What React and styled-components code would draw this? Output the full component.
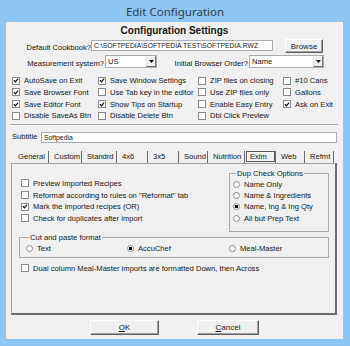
import React from 'react';
import styled, { createGlobalStyle } from 'styled-components';

const GlobalStyle = createGlobalStyle`
  html, body {
    margin: 0;
    padding: 0;
  }
  body {
    background: #8ec6f3;
    font-family: "Liberation Sans", Arial, sans-serif;
  }
`;

const topChecks = [
  [
    { label: 'AutoSave on Exit', on: true },
    { label: 'Save Browser Font', on: true },
    { label: 'Save Editor Font', on: true },
    { label: 'Disable SaveAs Btn', on: false },
  ],
  [
    { label: 'Save Window Settings', on: true },
    { label: 'Use Tab key in the editor', on: false },
    { label: 'Show Tips on Startup', on: true },
    { label: 'Disable Delete Btn', on: false },
  ],
  [
    { label: 'ZIP files on closing', on: false },
    { label: 'Use ZIP files only', on: false },
    { label: 'Enable Easy Entry', on: false },
    { label: 'Dbl Click Preview', on: false },
  ],
  [
    { label: '#10 Cans', on: false },
    { label: 'Gallons', on: false },
    { label: 'Ask on Exit', on: true },
  ],
];

const tabs = [
  { name: 'General', w: 36 },
  { name: 'Custom', w: 33 },
  { name: 'Standrd', w: 35 },
  { name: '4x6', w: 31 },
  { name: '3x5', w: 31 },
  { name: 'Sound', w: 29 },
  { name: 'Nutrition', w: 37 },
  { name: 'Exlm', w: 31, active: true },
  { name: 'Web', w: 29 },
  { name: 'Refmt', w: 29 },
];

const importChecks = [
  { label: 'Preview Imported Recipes', on: false },
  { label: 'Reformat according to rules on "Reformat" tab', on: false },
  { label: 'Mark the imported recipes (OR)', on: true },
  { label: 'Check for duplicates after import', on: false },
];

const dupOptions = [
  { label: 'Name Only', on: false },
  { label: 'Name & Ingredients', on: false },
  { label: 'Name, Ing & Ing Qty', on: true },
  { label: 'All but Prep Text', on: false },
];

const pasteOptions = [
  { label: 'Text', on: false, w: 101 },
  { label: 'AccuChef', on: true, w: 102 },
  { label: 'Meal-Master', on: false, w: 90 },
];

function Check({ label, on }) {
  return (
    <CheckRow>
      <Box>
        {on && (
          <svg width="7" height="7" viewBox="0 0 7 7">
            <path d="M1 3.2 L2.8 5 L6 1.2" fill="none" stroke="#111" strokeWidth="1.4" />
          </svg>
        )}
      </Box>
      <span>{label}</span>
    </CheckRow>
  );
}

function Radio({ label, on, w }) {
  return (
    <RadioRow $w={w}>
      <Dot $on={on} />
      <span>{label}</span>
    </RadioRow>
  );
}

function Combo({ value, width }) {
  return (
    <ComboBox $w={width}>
      <span>{value}</span>
      <Arrow>
        <svg width="5" height="3" viewBox="0 0 5 3">
          <path d="M0 0 H5 L2.5 3 Z" fill="#111" />
        </svg>
      </Arrow>
    </ComboBox>
  );
}

export default function App() {
  return (
    <>
      <GlobalStyle />
      <Window>
        <TitleBar>Edit Configuration</TitleBar>
        <Body>
          <Heading>Configuration Settings</Heading>

          <Row $top={2} $h={14}>
            <Label $w={85}>Default Cookbook?</Label>
            <Field $w={182}>C:\SOFTPEDIA\SOFTPEDIA TEST\SOFTPEDIA.RWZ</Field>
            <Button $w={38} $h={14} $ml={12}>Browse</Button>
          </Row>

          <Row $top={2} $h={13}>
            <Label $w={98}>Measurement system?</Label>
            <Combo value="US" width={52} />
            <Label $w={91}>Initial Browser Order?</Label>
            <Combo value="Name" width={75} />
          </Row>

          <CheckGrid>
            {topChecks.map((col, i) => (
              <CheckCol key={i}>
                {col.map((c) => (
                  <Check key={c.label} {...c} />
                ))}
              </CheckCol>
            ))}
          </CheckGrid>

          <Separator />

          <Row $top={5} $h={11}>
            <SubLabel>Subtitle</SubLabel>
            <Field $w={296}>Softpedia</Field>
          </Row>

          <TabStrip>
            {tabs.map((t) => (
              <Tab key={t.name} $w={t.w} $active={t.active}>
                {t.active ? <Focus>{t.name}</Focus> : t.name}
              </Tab>
            ))}
          </TabStrip>

          <Panel>
            <TopSection>
              <ImportList>
                {importChecks.map((c) => (
                  <Check key={c.label} {...c} />
                ))}
              </ImportList>
              <DupGroup>
                <Legend>Dup Check Options</Legend>
                {dupOptions.map((o) => (
                  <Radio key={o.label} {...o} />
                ))}
              </DupGroup>
            </TopSection>

            <PasteGroup>
              <Legend>Cut and paste format</Legend>
              <PasteRow>
                {pasteOptions.map((o) => (
                  <Radio key={o.label} {...o} />
                ))}
              </PasteRow>
            </PasteGroup>

            <DualRow>
              <Check label="Dual column Meal-Master imports are formatted Down, then Across" on={false} />
            </DualRow>
          </Panel>

          <Buttons>
            <Button $w={69} $h={15}>
              <u>O</u>K
            </Button>
            <Button $w={62} $h={15}>
              <u>C</u>ancel
            </Button>
          </Buttons>
        </Body>
      </Window>
    </>
  );
}

const Window = styled.div`
  width: 350px;
  height: 346px;
  background: #8ec6f3;
  display: flex;
  flex-direction: column;
  color: #161616;
  font-size: 7.6px;
`;

const TitleBar = styled.div`
  height: 22px;
  display: flex;
  align-items: center;
  justify-content: center;
  font-family: "Noto Sans", "Open Sans", sans-serif;
  font-size: 11.5px;
  color: #2e3c4a;
`;

const Body = styled.div`
  margin: 0 7px 7px 6px;
  height: 317px;
  background: #f0f0f0;
  display: flex;
  flex-direction: column;
`;

const Heading = styled.div`
  margin-top: 3px;
  height: 12px;
  line-height: 12px;
  text-align: center;
  font-weight: bold;
  font-size: 10px;
`;

const Row = styled.div`
  margin-top: ${(p) => p.$top}px;
  height: ${(p) => p.$h}px;
  display: flex;
  align-items: center;
`;

const Label = styled.div`
  width: ${(p) => p.$w}px;
  text-align: right;
  white-space: nowrap;
  padding-top: 3px;
`;

const SubLabel = styled.div`
  width: 35px;
  box-sizing: border-box;
  padding-left: 6px;
  white-space: nowrap;
`;

const Field = styled.div`
  width: ${(p) => p.$w}px;
  height: 11px;
  box-sizing: border-box;
  background: #fff;
  border: 1px solid #a9acb2;
  padding: 0 2px;
  line-height: 9px;
  font-size: 6.8px;
  white-space: nowrap;
  overflow: hidden;
  align-self: flex-start;
  margin-top: 1px;
`;

const Button = styled.div`
  width: ${(p) => p.$w}px;
  height: ${(p) => p.$h}px;
  margin-left: ${(p) => p.$ml || 0}px;
  box-sizing: border-box;
  display: flex;
  align-items: center;
  justify-content: center;
  background: #f0f0f0;
  border: 1px solid;
  border-color: #fff #5e5e5e #5e5e5e #fff;
  box-shadow: inset -1px -1px 0 #a0a0a0;
  font-size: 8px;
  color: #1a1a1a;
`;

const ComboBox = styled.div`
  width: ${(p) => p.$w}px;
  height: 13px;
  margin-left: 1px;
  box-sizing: border-box;
  background: #fff;
  border: 1px solid #a9acb2;
  display: flex;
  align-items: flex-start;
  justify-content: space-between;
  padding-left: 2px;
  line-height: 9px;

  & > span {
    padding-top: 1px;
  }
`;

const Arrow = styled.div`
  width: 10px;
  height: 11px;
  box-sizing: border-box;
  background: #f0f0f0;
  border: 1px solid;
  border-color: #fff #6e6e6e #6e6e6e #e6e6e6;
  display: flex;
  align-items: center;
  justify-content: center;
`;

const CheckGrid = styled.div`
  margin-top: 7px;
  padding-left: 6px;
  display: grid;
  grid-template-columns: 86px 100px 85px 1fr;
`;

const CheckCol = styled.div`
  display: grid;
  grid-auto-rows: 11.67px;
`;

const CheckRow = styled.div`
  display: flex;
  align-items: center;
  gap: 4px;
  white-space: nowrap;
`;

const Box = styled.span`
  width: 8px;
  height: 8px;
  box-sizing: border-box;
  border: 1px solid #8c8c8c;
  background: #fff;
  display: inline-flex;
  align-items: center;
  justify-content: center;
  flex: none;
`;

const RadioRow = styled.div`
  width: ${(p) => (p.$w ? `${p.$w}px` : 'auto')};
  height: 11.3px;
  display: flex;
  align-items: center;
  gap: 4px;
  white-space: nowrap;
`;

const Dot = styled.span`
  width: 7px;
  height: 7px;
  box-sizing: border-box;
  border-radius: 50%;
  border: 1px solid #8c8c8c;
  background: ${(p) => (p.$on ? 'radial-gradient(circle, #111 0 1.4px, #fff 1.8px)' : '#fff')};
  flex: none;
`;

const Separator = styled.div`
  margin: 2px 5px 0 4px;
  height: 1px;
  background: #a0a0a0;
  border-bottom: 1px solid #fff;
`;

const TabStrip = styled.div`
  margin-top: 9px;
  padding-left: 7px;
  height: 12px;
  display: flex;
`;

const Tab = styled.div`
  width: ${(p) => p.$w}px;
  box-sizing: border-box;
  padding-left: ${(p) => (p.$active ? 1 : 5)}px;
  border-right: 1px solid #6a6a6a;
  display: flex;
  align-items: center;
  font-size: 7.6px;
  white-space: nowrap;
`;

const Focus = styled.span`
  height: 11px;
  width: 29px;
  box-sizing: border-box;
  border: 1px solid #5a5a5a;
  box-shadow: inset 1px 1px 0 #fff;
  padding-left: 3px;
  display: flex;
  align-items: center;
`;

const Panel = styled.div`
  margin-left: 5px;
  width: 326px;
  height: 152px;
  box-sizing: border-box;
  border: 1px solid;
  border-color: #a0a0a0 #6a6a6a #6a6a6a #a0a0a0;
  border-width: 1px 2px 2px 1px;
  padding: 5px 0 0 7px;
  display: flex;
  flex-direction: column;
`;

const TopSection = styled.div`
  display: flex;
  justify-content: space-between;
  padding-right: 6px;
`;

const ImportList = styled.div`
  margin-top: 9px;
  padding-left: 2px;
  display: grid;
  grid-auto-rows: 11.67px;
`;

const DupGroup = styled.fieldset`
  margin: 0;
  width: 100px;
  height: 63px;
  box-sizing: border-box;
  border: 1px solid #a8a8a8;
  padding: 1px 0 0 3px;
`;

const Legend = styled.legend`
  padding: 0 1px;
  margin-left: 3px;
  font-size: 7.6px;
  line-height: 9px;
`;

const PasteGroup = styled.fieldset`
  margin: 1px 0 0 0;
  width: 310px;
  height: 25px;
  box-sizing: border-box;
  border: 1px solid #a8a8a8;
  padding: 0 0 0 6px;
`;

const PasteRow = styled.div`
  display: flex;
  margin-top: 1px;
`;

const DualRow = styled.div`
  margin-top: 5px;
  padding-left: 2px;
  height: 11.67px;
  display: flex;
`;

const Buttons = styled.div`
  margin-top: 5px;
  padding-left: 84px;
  display: flex;
  gap: 38px;
`;
